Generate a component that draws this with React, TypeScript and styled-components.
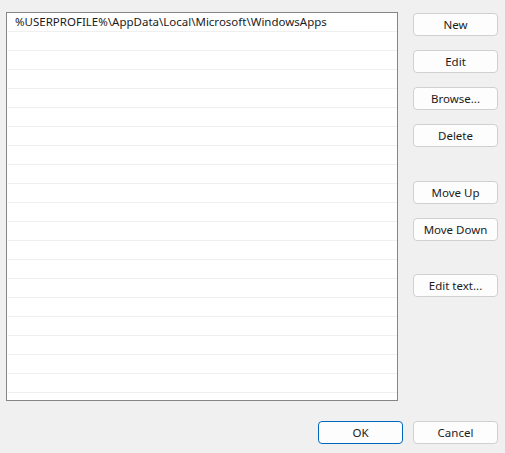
import { FC } from "react";
import styled, { createGlobalStyle } from "styled-components";

const GlobalStyle = createGlobalStyle`
  html, body {
    margin: 0;
    padding: 0;
    background: #f0f0f0;
  }
  body {
    font-family: "Noto Sans", "Open Sans", sans-serif;
    font-size: 11.5px;
    color: #1b1b1b;
  }
`;

const paths = ["%USERPROFILE%\\AppData\\Local\\Microsoft\\WindowsApps"];
const ROW_COUNT = 20;

const App: FC = () => {
  const rows = Array.from({ length: ROW_COUNT }, (_, i) => paths[i] ?? "");

  return (
    <>
      <GlobalStyle />
      <Dialog>
        <Main>
          <ListBox>
            {rows.map((text, i) => (
              <Row key={i}>{text}</Row>
            ))}
          </ListBox>
          <Side>
            <Group>
              <Button>New</Button>
              <Button>Edit</Button>
              <Button>Browse...</Button>
              <Button>Delete</Button>
            </Group>
            <Group $top={34}>
              <Button>Move Up</Button>
              <Button>Move Down</Button>
            </Group>
            <Group $top={33}>
              <Button>Edit text...</Button>
            </Group>
          </Side>
        </Main>
        <Footer>
          <Button $primary>OK</Button>
          <Button>Cancel</Button>
        </Footer>
      </Dialog>
    </>
  );
};

export default App;

const Dialog = styled.div`
  width: 505px;
  height: 453px;
  box-sizing: border-box;
  padding: 12px 7px 0 6px;
  display: flex;
  flex-direction: column;
`;

const Main = styled.div`
  display: flex;
  gap: 15px;
`;

const ListBox = styled.div`
  width: 392px;
  height: 389px;
  box-sizing: border-box;
  border: 1px solid #868686;
  background: #ffffff;
  overflow: hidden;
`;

const Row = styled.div`
  height: 18px;
  margin-left: 1px;
  padding-left: 7px;
  border-bottom: 1px solid #efefef;
  line-height: 18px;
  white-space: nowrap;
`;

const Side = styled.div`
  display: flex;
  flex-direction: column;
  padding-top: 1px;
`;

const Group = styled.div<{ $top?: number }>`
  display: flex;
  flex-direction: column;
  gap: 14px;
  margin-top: ${(p) => p.$top ?? 0}px;
`;

const Button = styled.button<{ $primary?: boolean }>`
  width: 85px;
  height: 23px;
  box-sizing: border-box;
  padding: 0;
  border-radius: 4px;
  border: 1px solid ${(p) => (p.$primary ? "#0067c0" : "#d0d0d0")};
  background: #fdfdfd;
  font-family: "Noto Sans", "Open Sans", sans-serif;
  font-size: 11.5px;
  color: #1b1b1b;
  line-height: 21px;
`;

const Footer = styled.div`
  display: flex;
  justify-content: flex-end;
  gap: 10px;
  margin-top: 20px;
`;
